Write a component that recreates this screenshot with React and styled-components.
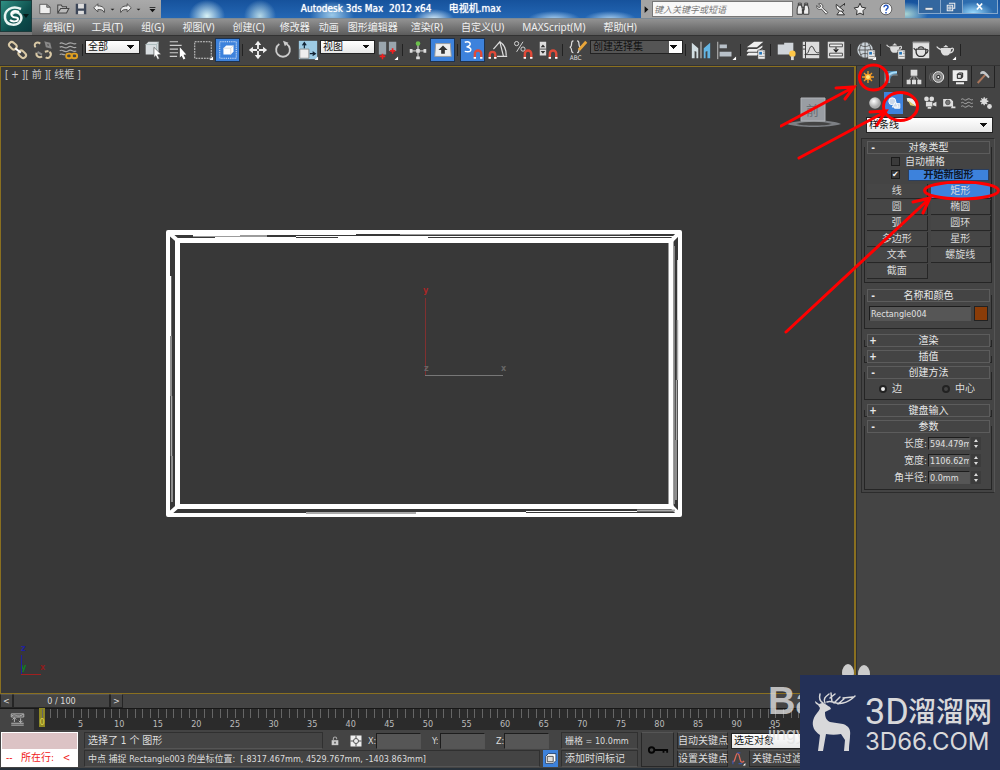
import React from "react";
import styled, { createGlobalStyle } from "styled-components";

const GlobalStyle = createGlobalStyle`
  * { box-sizing: border-box; }
  body { margin: 0; background: #444; color: #ddd; font: 10px/12px "DejaVu Sans Condensed", "Noto Sans", "Noto Sans CJK SC", sans-serif; overflow: hidden; }
  button, input, select { font: inherit; color: inherit; margin: 0; padding: 0; border: 0; border-radius: 0; background: none; }
  svg { display: block; flex: none; }
`;

const Window = styled.div`
  position: relative;
  min-height: 100vh;
  display: flex;
  flex-direction: column;
  background: #444;
`;

/* ---------- header ---------- */
const Header = styled.header`
  display: grid;
  grid-template-columns: 32px minmax(0, 1fr);
  grid-template-rows: 19px 16px;
  background: #777;
`;
const AppButton = styled.button`
  grid-row: 1 / 3;
  height: 32px;
  background: linear-gradient(135deg, #2f8f83, #0d4f4d 60%, #0a3c40);
  border: 1px solid #1c3b3b;
`;
const TitleBar = styled.div`
  display: flex;
  min-width: 0;
  background:
    radial-gradient(ellipse 18px 16px at 175px 16px, #d9f3f6, transparent),
    radial-gradient(ellipse 16px 16px at 228px 16px, #b5d8e6, transparent),
    radial-gradient(ellipse 22px 14px at 300px 15px, #9cc9e8, transparent),
    radial-gradient(ellipse 20px 10px at 402px 19px, #d8ecf8, transparent),
    radial-gradient(ellipse 26px 8px at 522px 19px, #a8cdec, transparent),
    radial-gradient(ellipse 26px 8px at 578px 19px, #a8cdec, transparent),
    radial-gradient(ellipse 22px 12px at 874px 14px, #a9d4d2, transparent),
    linear-gradient(#16529c, #2467b4);
  border-bottom: 1px solid #7d8a94;
`;
const QuickAccess = styled.div`
  display: flex;
  align-items: center;
  width: 129px;
  padding-left: 4px;
  background: linear-gradient(#aaa, #999);
`;
const QuickButton = styled.button`
  display: flex;
  justify-content: center;
  width: ${(p) => (p.$narrow ? 9 : 19)}px;
`;
const Title = styled.h1`
  flex: 1;
  margin: 0;
  font-size: 10px;
  line-height: 18px;
  font-weight: 400;
  text-align: center;
  white-space: pre;
  color: #fff;
  text-shadow: 0 0 1px #fff;
`;
const SearchArea = styled.div`
  display: flex;
  align-items: center;
  width: 264px;
  background: #a3a3a3;
`;
const SearchInput = styled.input`
  width: 141px;
  height: 16px;
  padding: 0 1px;
  background: #f8f8f8;
  border: 1px solid #777;
  &::placeholder { color: #777; font-size: 9px; font-style: italic; opacity: 1; }
`;
const SearchButton = styled.button`
  display: flex;
  justify-content: center;
  width: ${(p) => (p.$wide ? 34 : p.$narrow ? 11 : 19)}px;
`;
const WindowButtons = styled.div`
  display: flex;
  width: 95px;
  height: 14px;
  padding: 0 2px 0 13px;
`;
const WindowButton = styled.button`
  flex: ${(p) => (p.$wide ? 36 : 22)};
  display: flex;
  align-items: center;
  justify-content: center;
  border: 1px solid #86a8cc;
  border-top: 0;
  border-left-width: ${(p) => (p.$first ? 1 : 0)}px;
  background: ${(p) => (p.$wide ? "radial-gradient(ellipse at 30% 100%, #9adcff, #2c6cae 60%)" : "#33679f")};
`;
const MenuBar = styled.nav`
  display: flex;
  gap: 9px;
  padding-left: 11px;
  background: linear-gradient(#929292, #5c5c5c);
`;
const MenuButton = styled.button`
  margin-right: ${(p) => p.$after}px;
  font-family: "Noto Sans", "Noto Sans CJK SC", sans-serif;
  line-height: 15px;
  white-space: nowrap;
  color: #f0f0f0;
`;

/* ---------- tool bar ---------- */
const ToolBar = styled.div`
  display: flex;
  align-items: center;
  height: 31px;
  padding: 0 0 2px 5px;
  border-top: 1px solid #333;
  border-bottom: 1px solid #333;
  background: #444;
`;
const ToolButton = styled.button`
  flex: none;
  display: flex;
  align-items: center;
  justify-content: center;
  width: 25px;
  height: 24px;
  ${(p) => p.$on && "background: #3d82dc; border: 1px solid #1d3350;"}
`;
const Separator = styled.span`
  flex: none;
  width: 1px;
  height: 12px;
  margin: 0 2px;
  background: #222;
`;
const Drop = styled.select`
  appearance: none;
  flex: none;
  width: ${(p) => p.$w}px;
  height: 14px;
  margin-bottom: 6px;
  padding: 0 14px 0 2px;
  line-height: 12px;
  color: #111;
  border: 1px solid #222;
  background:
    linear-gradient(to bottom left, #111 50%, transparent 50%) right 8px center / 4px 4px no-repeat,
    linear-gradient(to bottom right, #111 50%, transparent 50%) right 4px center / 4px 4px no-repeat,
    ${(p) => (p.$dark ? "linear-gradient(to left, #fff 13px, #555 13px)" : "linear-gradient(#fff, #e8e8e8)")};
`;

/* ---------- viewport ---------- */
const Main = styled.main`
  flex: 1;
  display: grid;
  grid-template-columns: minmax(0, 1fr) 144px;
  min-height: 0;
`;
const Viewport = styled.section`
  display: grid;
  background: #383838;
  border: 1px solid #8a7020;
  border-width: 1px 2px 1px 1px;
  > * { grid-area: 1 / 1; }
`;
const ViewLabel = styled.span`
  padding: 2px 4px;
  color: #ccc;
`;
const Scene = styled.svg`
  width: 100%;
  height: 100%;
`;

/* ---------- command panel ---------- */
const Panel = styled.aside`
  padding: 0 5px 0 4px;
  border-left: 1px solid #303030;
`;
const Tabs = styled.div`
  display: flex;
  height: 22px;
  margin: 0 0 4px -4px;
`;
const Tab = styled.button`
  flex: 1;
  display: flex;
  align-items: center;
  justify-content: center;
  border-right: 1px solid #222;
  border-bottom: ${(p) => (p.$on ? 0 : 1)}px solid #2a2a2a;
`;
const Categories = styled.div`
  display: flex;
  height: 22px;
  margin: 0 0 3px 5px;
`;
const Category = styled.button`
  flex: 1;
  display: flex;
  align-items: center;
  justify-content: center;
  background: ${(p) => (p.$on ? "#3d82dc" : "none")};
`;
const PanelDrop = styled(Drop)`
  display: block;
  height: 16px;
  margin: 0 0 5px 5px;
`;
const Rollouts = styled.div`
  display: flex;
  flex-direction: column;
  gap: 3px;
  padding: 2px;
  border: 1px solid #2c2c2c;
  border-right-color: #555;
`;
const Group = styled.section`
  display: flex;
  flex-direction: column;
`;
const GroupHead = styled.button`
  position: relative;
  display: grid;
  grid-template-columns: 10px 1fr 10px;
  margin: 0 2px 0 3px;
  height: 13px;
  line-height: 11px;
  color: #e8e8e8;
  background: #444;
  border: 1px solid #5c5c5c;
`;
const GroupBody = styled.div`
  margin-top: -7px;
  padding: ${(p) => (p.$closed ? "6px 0 0" : "8px 0 3px 2px")};
  border: 1px solid #252525;
  border-top: 0;
  margin-bottom: ${(p) => (p.$tail || 0)}px;
`;
const CheckRow = styled.div`
  display: flex;
  align-items: center;
  gap: 6px;
  height: 13px;
  padding-left: 24px;
`;
const Check = styled.input`
  appearance: none;
  width: 9px;
  height: 9px;
  margin-right: -1px;
  background: #3a3a3a;
  border: 1px solid #1c1c1c;
  &:checked::after { content: "✔"; display: block; font: 8px/7px "DejaVu Sans", sans-serif; color: #fff; }
`;
const StartButton = styled.button`
  width: 81px;
  height: 12px;
  margin-left: 3px;
  line-height: 10px;
  color: #10182a;
  font-weight: 700;
  background: #3d82dc;
  border: 1px solid #2a3f60;
`;
const ShapeGrid = styled.div`
  display: grid;
  grid-template-columns: 1fr 1fr;
  gap: 1px 3px;
  padding-top: 3px;
`;
const ShapeButton = styled.button`
  height: 15px;
  line-height: 14px;
  color: #d8d8d8;
  background: ${(p) => (p.$on ? "#3d82dc" : "#464646")};
  border-right: 1px solid #262626;
  border-bottom: 1px solid #262626;
`;
const Field = styled.input`
  flex: ${(p) => (p.$w ? "none" : "1")};
  width: ${(p) => (p.$w ? p.$w + "px" : "0")};
  height: ${(p) => p.$h || 13}px;
  padding: 0 0 0 1px;
  font-size: 9px;
  color: #e0e0e0;
  background: #565656;
  border: 1px solid #1d1d1d;
  border-right-color: #555;
  border-bottom-color: #555;
`;
const NameRow = styled.div`
  display: flex;
  gap: 3px;
  padding: 3px 3px 4px 2px;
`;
const Swatch = styled.button`
  width: 14px;
  height: 15px;
  background: #8a3c08;
  border: 1px solid #222;
`;
const RadioRow = styled.div`
  display: flex;
  gap: 40px;
  padding: 3px 12px 1px;
`;
const RadioLabel = styled.label`
  display: flex;
  align-items: center;
  gap: 5px;
`;
const Radio = styled.input`
  appearance: none;
  width: 8px;
  height: 8px;
  border: 2px solid #222;
  border-radius: 50%;
  background: #444;
  &:checked { background: #eee; }
`;
const Params = styled.div`
  padding-top: 1px;
`;
const ParamRow = styled.label`
  display: flex;
  align-items: center;
  justify-content: flex-end;
  gap: 1px;
  height: 17px;
  padding-right: 10px;
`;

/* ---------- time line ---------- */
const TimeBar = styled.div`
  display: flex;
  height: 14px;
`;
const TimeButton = styled.button`
  width: ${(p) => (p.$thumb ? 97 : 13)}px;
  line-height: 12px;
  font-size: 9px;
  border: 1px solid #252525;
  border-top-color: #555;
`;
const Ruler = styled.div`
  display: flex;
  height: 22px;
  background: #2b2b2b;
  border-top: 1px solid #181818;
  padding-right: 186px;
`;
const CurveButton = styled.button`
  width: 34px;
  display: flex;
  align-items: center;
  justify-content: center;
  background: #444;
`;
const Frames = styled.div`
  flex: 1;
  display: flex;
  margin-left: 8px;
`;
const Major = styled.div`
  flex: 1;
  min-width: 0;
`;
const Ticks = styled.div`
  display: flex;
  height: 9px;
`;
const Tick = styled.span`
  flex: 1;
  border-left: 1px solid #666;
`;
const TickLabel = styled.span`
  display: block;
  width: 20px;
  margin-left: -10px;
  font-size: 9px;
  line-height: 12px;
  text-align: center;
  color: #bbb;
`;
const Current = styled(TickLabel)`
  width: 6px;
  margin: -10px 0 0 -3px;
  padding-top: 9px;
  height: 19px;
  line-height: 10px;
  background: #8d8722;
  color: #ddd04c;
`;

/* ---------- status area ---------- */
const StatusBar = styled.footer`
  display: flex;
  height: 40px;
  padding: 2px 0 1px 1px;
  border-bottom: 2px solid #27313a;
`;
const Script = styled.div`
  display: grid;
  grid-template-rows: 1fr 1fr;
  width: 77px;
  margin-right: 6px;
  border: 1px solid #fff;
`;
const ScriptLine = styled.div`
  padding: 0 4px;
  line-height: 17px;
  white-space: pre;
  color: #f02020;
  background: ${(p) => (p.$pink ? "#dcc3c5" : "#fff")};
`;
const Column = styled.div`
  display: flex;
  flex-direction: column;
  gap: 1px;
  width: ${(p) => p.$w}px;
  margin-right: 3px;
`;
const StatusRow = styled.div`
  display: flex;
  align-items: center;
  gap: 3px;
  height: 18px;
`;
const StatusBox = styled.span`
  flex: ${(p) => (p.$w ? "none" : 1)};
  width: ${(p) => (p.$w ? p.$w + "px" : "auto")};
  height: 17px;
  padding: 0 3px;
  font-size: ${(p) => (p.$small ? 9 : 10)}px;
  line-height: 16px;
  white-space: pre;
  border: 1px solid #303030;
  border-bottom-color: #555;
`;
const CoordLabel = styled.label`
  display: flex;
  align-items: center;
  justify-content: space-between;
  width: 53px;
  margin-right: 8px;
  font-size: 9px;
`;
const IconButton = styled.button`
  display: flex;
  align-items: center;
  justify-content: center;
  width: ${(p) => p.$w || 18}px;
  height: 17px;
  background: ${(p) => (p.$on ? "#3d82dc" : "none")};
`;
const KeyButton = styled.button`
  display: flex;
  align-items: center;
  justify-content: center;
  width: 33px;
  height: 35px;
  margin-right: 3px;
  border: 1px solid #282828;
  border-top-color: #555;
`;
const KeyDrop = styled(Drop)`
  height: 16px;
  margin: 1px 0 0;
`;
const TextButton = styled.button`
  width: ${(p) => p.$w || 51}px;
  height: 17px;
  line-height: 15px;
  text-align: ${(p) => (p.$w ? "left" : "center")};
  padding-left: ${(p) => (p.$w ? 2 : 0)}px;
  white-space: nowrap;
  border: 1px solid #282828;
  border-top-color: #555;
`;

/* ---------- overlays ---------- */
const Marks = styled.svg`
  position: absolute;
  top: 60px;
  right: 0;
  pointer-events: none;
`;
const Watermark = styled.div`
  position: absolute;
  right: 130px;
  bottom: 26px;
  width: 102px;
  height: 82px;
  display: flex;
  flex-direction: column;
  font: 700 38px/38px "Liberation Sans", sans-serif;
  color: rgba(225, 225, 225, 0.8);
`;
const Paw = styled.svg`
  margin-left: 72px;
`;
const WatermarkSub = styled.span`
  margin-top: 6px;
  font: 18px/16px "Liberation Sans", sans-serif;
`;
const Brand = styled.div`
  position: absolute;
  right: 0;
  bottom: 0;
  display: flex;
  width: 200px;
  height: 95px;
  padding-left: 11px;
  background: #233057;
  color: #d8d8da;
`;
const BrandText = styled.div`
  padding: 18px 0 0 2px;
  white-space: nowrap;
`;
const BrandName = styled.div`
  display: flex;
  font: 500 28px/34px "Noto Sans CJK SC", sans-serif;
`;
const BrandD = styled.span`
  width: 43px;
  font: 400 36px/38px Roboto, sans-serif;
`;
const BrandUrl = styled.div`
  font: 400 24px/22px Inter, sans-serif;
`;

/* ---------- icons ---------- */
const L = "#ddd";
const flyout = <path d="M23 19v4h-4z" fill="#fff" />;
const magnet = <path d="M14 21v-5a3.500 3.500 0 0 1 7 0v5" stroke="#e04a38" strokeWidth="2.600" />;
const magnetTip = <path d="M12.700 20.500h2.600M19.700 20.500h2.600" stroke="#fff" strokeWidth="2" />;
const card = <g><path d="M14 12h8v10h-8z" fill="#eee" stroke="#333" strokeWidth=".6" /><path d="M15.500 14h3v3h-3z" fill="#2475b8" /><path d="M19.500 14h2M19.500 16h2M15.500 19h6" stroke="#888" strokeWidth="1" /></g>;
const teapot = (
  <g fill="#ddd">
    <path d="M6 11h12c1 4-1 8-4 9h-4c-3-1-5-5-4-9z" />
    <path d="M9 10c0-2 6-2 6 0zM11 7.500h2v2h-2z" />
    <path d="M6 13c-3-2-4-2-5-4M18 12c4-3 5 3-1 5" fill="none" stroke="#ddd" strokeWidth="1.500" />
  </g>
);
const I = {
  link: <g stroke="#d9c9a6" strokeWidth="2.200"><rect x="2" y="4" width="9" height="6" rx="3" transform="rotate(42 6 7)" /><rect x="12" y="14" width="9" height="6" rx="3" transform="rotate(42 17 17)" /><path d="m9 10 6 5" stroke="#fff" /></g>,
  unlink: <g strokeWidth="2.200"><path d="M9 5C5 2 1 6 4 9M5 15c-1 4 3 6 6 4M19 14c4 3-1 9-4 6M14 14l4-1" stroke="#d9c9a6" /><path d="m15 4 4 1 1 4-4-1zM6 14l5 3" stroke="#888" /></g>,
  bind: <g><path d="M3 5c3-3 5 3 9 0s5 2 9 0M3 9c3-3 5 3 9 0s5 2 9 0M3 13c3-3 5 3 9 0s5 2 9 0M3 17c2-2 4 1 6 0" stroke="#aaa" strokeWidth="1.300" /><rect x="10" y="16" width="6" height="5" rx="2.500" stroke="#e0a020" strokeWidth="2" /><rect x="16" y="16" width="6" height="5" rx="2.500" stroke="#e0a020" strokeWidth="2" /></g>,
  pick: <g><path d="m4 6 3-3h11v11l-2 3H4z" fill="#d8dde0" /><path d="M4 6h12v11M16 6l2-3" stroke="#abb" /><path d="m13 9 8 8-4 .3 2 4-2 1-2-4-2 2z" fill="#fff" stroke="#444" strokeWidth=".7" /></g>,
  byname: <g><path d="M3 3h9M3 7h13M3 11h9M3 15h9M3 19h8" stroke="#ccc" strokeWidth="1.200" /><path d="m14 9 7 8-3 .3 2 4-2 1-2-4-2 2z" fill="#fff" /></g>,
  region: <g><rect x="3" y="3" width="18" height="18" stroke="#ddd" strokeDasharray="2 1" />{flyout}</g>,
  crossing: <g><rect x="3" y="3" width="18" height="18" stroke="#fff" strokeDasharray="1 1" /><path d="m7 10 3-3h8v7l-3 3H7z" fill="#fff" /><path d="M7 10h8v7M15 10l3-3" stroke="#ccc" strokeWidth=".8" /></g>,
  move: <g fill="#eee"><path d="M12 2l3.500 4.500h-7zM12 22l3.500-4.500h-7zM2 12l4.500-3.500v7zM22 12l-4.500-3.500v7z" /><path d="M12 6v5M12 13v5M6 12h5M13 12h5" stroke="#eee" strokeWidth="2" /></g>,
  rotate: <g><path d="M16 5.500A7.500 7.500 0 1 1 8 5.500" stroke="#ccc" strokeWidth="2" /><path d="m12 2 6 2-4 4z" fill="#ccc" /></g>,
  scale: <g><path d="M2 2h20v20H2z" fill="#9dcbe4" /><path d="M3 11h10v10H3z" fill="#eee" stroke="#888" /><path d="M8 10V5M6 7l2-3 2 3M14 16h5M17 14l3 2-3 2" stroke="#123" strokeWidth="1.300" />{flyout}</g>,
  pivot: <g><path d="M2 3h8v14H2zM13 3h8v10h-8z" fill="#9aa5ad" /><path d="M6 16v6M3 19h6M17 10v6M14 13h6" stroke="#f02020" strokeWidth="1.800" />{flyout}</g>,
  manip: <g><path d="M12 5v16M4 13h16" stroke="#bbb" strokeWidth="1.500" /><circle cx="12" cy="5" r="2.500" fill="#6cc04c" /><path d="M10 19h4v3h-4zM3 11h3v4H3zM18 11h3v4h-3zM10 11h4v4h-4z" fill="#ddd" /></g>,
  keyb: <g><path d="M4 5h16l1 14H3z" fill="#eee" stroke="#999" /><path d="m12 7 5 5h-3v4h-4v-4H7z" fill="#333" /></g>,
  snap: <g><path d="M3 3.500c7-2 8 4 2 5 7 1 6 7-2 5" stroke="#fff" strokeWidth="1.600" />{magnet}{magnetTip}</g>,
  angle: <g><path d="M3 21v-4a3 3 0 0 1 6 0v4" stroke="#e04a38" strokeWidth="2.500" /><path d="M1.700 20.500h2.600M7.700 20.500h2.600" stroke="#fff" strokeWidth="2" /><path d="M7 11l7-8 4 16M11 19h11M14 3c5 3 7 9 7 15" stroke="#ddd" strokeWidth="1.300" /></g>,
  percent: <g><circle cx="5" cy="5" r="2.300" stroke={L} /><circle cx="12" cy="11" r="2.300" stroke={L} /><path d="m12 3-7 11" stroke={L} />{magnet}{magnetTip}</g>,
  spin: <g><path d="M3 3h7v15H3z" fill="#ddd" /><path d="m4 9 2.500-3L9 9zM4 13l2.500 3L9 13z" fill="#333" /><path d="M3 11h7" stroke="#444" />{magnet}{magnetTip}</g>,
  sets: <g><path d="M7 2C3 2 7 8 3 9c4 1 0 6 4 6M11 2c4 0 0 6 4 7-4 1 0 6-4 6" stroke="#ddd" strokeWidth="1.300" /><path d="m21 3-8 9" stroke="#e9a63a" strokeWidth="3" /><text x="3" y="23" fontSize="7" fill="#ddd">ABC</text></g>,
  mirror: <g><path d="M2 4l7 6v11H7v-7l-2-1v8H2z" fill="#d2dee2" /><path d="M22 4l-7 6v11h2v-7l2-1v8h3z" fill="#63b5e4" /><path d="M12 3v18" stroke="#ddd" /></g>,
  align: <g><path d="M3 3v19" stroke="#ccc" /><path d="M5 6h8v4H5zM5 14h13v5H5z" fill="#b8c0c8" />{flyout}</g>,
  layers: <g><path d="m2 9 8-6h10l-7 6zM2 13l2-2h9l6-4v2l-6 5H2zM2 17l2-2h10l5-4v2l-6 5H2z" fill="#eee" />{card}</g>,
  ribbon: <g><path d="M3 6h7V4h10v13H3z" fill="#d0d5da" /><circle cx="19" cy="16" r="3.500" fill="#ffc747" /><path d="M19 19v4" stroke="#ddd" strokeWidth="3" /></g>,
  curve: <g><path d="M3 3h18v18H3z" fill="#ddd" /><path d="M6 3v18M5 17h16M3 7h3M3 11h3M7 16c3 0 3-9 6-8s2 8 8 7" stroke="#333" /></g>,
  schematic: <g><path d="M3 3h18v18H3z" fill="#ddd" /><path d="M5 5.500h14v3H5zM5 15.500h14v3H5z" stroke="#444" fill="#eee" /><path d="M12 9v4M9.500 11l2.500 3 2.500-3" stroke="#222" strokeWidth="1.300" /></g>,
  material: <g><circle cx="11" cy="12" r="8.500" fill="#ccd4da" /><path d="M3 12h16M11 3v18M5 6c4 3 8 3 12 0M5 18c4-3 8-3 12 0M8 4c-4 5-4 11 0 16M14 4c4 5 4 11 0 16" stroke="#555" />{card}{flyout}</g>,
  rsetup: <g><g transform="translate(1 -1) scale(.8)">{teapot}</g>{card}</g>,
  rframe: <g><path d="M3 3h18v18H3z" fill="#e2e2e2" /><path d="M3 4h18" stroke="#888" /><path d="M7 11h10c1 4-1 7-3 8h-4c-2-1-4-4-3-8zM9 10c1-2 5-2 6 0M7 13l-3-3M17 12c4-2 3 3 0 4" stroke="#333" strokeWidth="1.300" /></g>,
  render: <g><g transform="translate(1 0) scale(.9)">{teapot}</g>{flyout}</g>,
  /* quick access */
  new: <path d="M3 4h12l6 5v11H3zM15 4v5h6" fill="#eee" stroke="#555" strokeWidth="1.500" />,
  open: <path d="M3 19V5h6l2 3h7v3M3 19l5-8h14l-4 8z" fill="#bbb" stroke="#444" strokeWidth="1.800" />,
  save: <g><path d="M3 3h18v18H3z" fill="#3d4758" /><path d="M7 3h10v8H7zM7 15h10v6H7z" fill="#ddd" /></g>,
  undo: <path d="m3 10 7-7v4c8-1 13 4 11 11-2-5-6-5-11-5v4z" fill="#eee" stroke="#444" strokeWidth="1.500" />,
  redo: <path d="m21 10-7-7v4C6 6 1 11 3 18c2-5 6-5 11-5v4z" fill="#eee" stroke="#444" strokeWidth="1.500" />,
  caret: <path d="M3 8h18l-9 9z" fill="#222" />,
  bar: <path d="M2 3h20v3H2zM2 10h20l-10 11z" fill="#111" />,
  right: <path d="m7 3 10 9-10 9z" fill="#111" />,
  bino: <g fill="#eee" stroke="#333" strokeWidth="1.600"><path d="M4 5h5l2 7v9H2v-9zM15 5h5l2 7v9h-9v-9zM10 9h4v5h-4M4 2h5v3H4zM15 2h5v3h-5z" /></g>,
  wrench: <path d="M3 6c-1 6 4 8 8 6l8 9 3-3-9-8c2-5-3-9-7-7l4 4-3 3z" fill="#eee" stroke="#444" strokeWidth="1.500" />,
  dish: <path d="M4 4c-2 8 6 14 13 11zM10 9l8-6M9 16l-4 6h13l-5-6M18 2v4" fill="#eee" stroke="#333" strokeWidth="1.700" />,
  star: <path d="m12 2 3 7 7 1-5 5 1 7-6-3-6 3 1-7-5-5 7-1z" fill="#eee" stroke="#333" strokeWidth="1.700" />,
  help: <g><circle cx="12" cy="12" r="10" fill="#fff" stroke="#555" strokeWidth="1.500" /><path d="M8.500 9c0-5 7-4 7 0 0 3-3.500 2-3.500 6M12 17v2.500" stroke="#2456c0" strokeWidth="2.500" /></g>,
  /* command panel */
  sun: <g><path d="M12 3v18M3 12h18M6 6l12 12M18 6 6 18" stroke="#f09a28" strokeWidth="2" /><circle cx="12" cy="12" r="4" fill="#ffe67a" stroke="#f59b24" strokeWidth="2" /></g>,
  modify: <g><path d="M4 3h17v5c-7 0-11 5-11 13H4z" fill="#477fa5" /><path d="M5 20C5 9 12 5 21 5" stroke="#a8ddfa" strokeWidth="3" /><path d="M3 2v20M10 21V9h12" stroke="#bbb" /></g>,
  hierarchy: <g fill="#ddd"><path d="M7 1h10v9H7zM1 16h6v7H1zM9 16h6v7H9zM17 16h6v7h-6z" /><path d="M12 10v7M4 17l6-7M20 17l-6-7" stroke="#ccc" /></g>,
  motion: <g><circle cx="14" cy="12" r="8" fill="#888" stroke="#eee" strokeWidth="1.500" /><circle cx="14" cy="12" r="4" fill="#333" stroke="#ccc" /><circle cx="14" cy="12" r="1.500" fill="#fff" /><path d="M3 6c-3 5-3 8 0 12M6 5c-3 5-3 9 0 14" stroke="#777" /></g>,
  display: <g><path d="M1 2h22v16H1zM6 20h12v3H6z" fill="#eee" /><path d="M8 8l2-2h6v6l-2 2H8zM8 8h6v6" fill="#ddd" stroke="#222" strokeWidth="1.500" /></g>,
  hammer: <g><path d="M16 8 4 21" stroke="#aa765b" strokeWidth="3" /><path d="M8 5c4-4 8-2 14 7l-2 2-6-6c-2-1-4-1-6 0z" fill="#c5c9cc" /></g>,
  sphere: <circle cx="12" cy="12" r="10" fill="url(#ball)" />,
  shapes: <g fill="#ccd8ea" stroke="#fff" strokeWidth="1.500"><path d="M13 13h9v8h-9z" /><circle cx="9" cy="9" r="6" /><path d="m15 10-6 9h10z" /></g>,
  light: <g><path d="M3 4c8-2 16 4 17 14L4 9z" fill="#eee" /><path d="m5 7 14 11-10-2z" fill="#dfcf70" /></g>,
  camera: <g fill="#ddd"><circle cx="6" cy="5" r="4" /><circle cx="15" cy="5" r="4" /><path d="M5 10h11v8H5zM17 13l6-3v8l-6-2zM8 19h6v3H8z" /></g>,
  tape: <g><path d="M2 5h13l4 4v9H2zM17 18h6v3h-8z" fill="#ddd" /><circle cx="10" cy="11" r="4" fill="#777" stroke="#333" /></g>,
  waves: <path d="M2 6c4-4 5 4 10 0s6 3 10 0M2 12c4-4 5 4 10 0s6 3 10 0M2 18c4-4 5 4 10 0s6 3 10 0" stroke="#aaa" strokeWidth="1.700" />,
  gears: <g stroke="#ddd" strokeWidth="2.200"><circle cx="9" cy="9" r="4" fill="#ddd" strokeDasharray="2 1" /><path d="M9 2v14M2 9h14M4 4l10 10M14 4 4 14" /><circle cx="18" cy="18" r="3" fill="#ddd" /></g>,
  /* status area */
  lock: <g><path d="M4 10h16v12H4z" fill="#ccc" /><path d="M8 10V6c0-5 8-5 8 0v2" stroke="#aaa" strokeWidth="2.500" /><path d="M12 14v4" stroke="#333" strokeWidth="3" /></g>,
  center: <g><path d="M1 1h22v22H1z" fill="#eee" /><circle cx="12" cy="12" r="5" stroke="#555" strokeWidth="2" /><path d="M12 1v6M12 17v6M1 12h6M17 12h6" stroke="#555" strokeWidth="2" /></g>,
  iso: <g><path d="M3 8 8 3h14v13l-5 5H3z" fill="#fff" stroke="#1d3558" strokeWidth="1.500" /><path d="M6 8h11v10H6z" fill="#ddd" stroke="#333" strokeWidth="1.500" /></g>,
  key: <g stroke="#050505" strokeWidth="2"><circle cx="5" cy="12" r="3" /><path d="M8 12h14v3M18 12v3" /></g>,
  wave: <g><path d="M2 17c5 3 5-14 9-13s2 20 10 12" stroke="#e06a5a" strokeWidth="2" /><path d="M3 15v6M10 3h5M12 20h6" stroke="#3653a5" strokeWidth="2" />{flyout}</g>,
  mini: <g stroke="#bbb" strokeWidth="1.500"><path d="M2 3h20v5H2zM2 21h20M2 18h20M7 10v6M17 10v6M4 12l3-3 3 3M14 14l3 3 3-3M3 6c6-4 8 4 18-2" /></g>,
  min: <path d="M3 14h18v5H3z" fill="#fff" stroke="#456" />,
  max: <path d="M7 3h14v12h-4M3 8h13v13H3zM7 12h5v5H7z" stroke="#eee" strokeWidth="2.500" />,
  close: <path d="M5 4l14 16M19 4 5 20" stroke="#fff" strokeWidth="4.500" />,
};
const Icon = ({ n, s = 22 }) => (
  <svg width={s} height={s} viewBox="0 0 24 24" fill="none" aria-hidden="true">
    {n === "sphere" && (
      <defs><radialGradient id="ball" cx=".4" cy=".35"><stop offset="0" stopColor="#fff" /><stop offset="1" stopColor="#aaa" /></radialGradient></defs>
    )}
    {I[n]}
  </svg>
);

const menus = [["编辑(E)", 8], ["工具(T)", 9], ["组(G)", 9], ["视图(V)", 9], ["创建(C)", 6], ["修改器", 0], ["动画", 0], ["图形编辑器", 4], ["渲染(R)", 9], ["自定义(U)", 9], ["MAXScript(M)", 9], ["帮助(H)", 0]];
const quick = [["new", 14], ["open", 14], ["save", 14], ["undo", 14], ["caret", 5], ["redo", 14], ["caret", 5], ["bar", 7]];
const tools = ["link", "unlink", "bind", "|", ["全部", 55], "pick", "byname", "region", "crossing*", "|", "move", "rotate", "scale", ["视图", 55], "pivot", "|", "manip", "keyb*", "|", "snap*", "angle", "percent", "spin", "|", "sets", ["创建选择集", 93, true], "|", "mirror", "align", "|", "layers", "|", "ribbon", "curve", "schematic", "|", "material", "|", "rsetup", "rframe", "render", "|"];
const shapes = ["线", "矩形", "圆", "椭圆", "弧", "圆环", "多边形", "星形", "文本", "螺旋线", "截面"];

function Tool({ item }) {
  if (item === "|") return <Separator />;
  if (Array.isArray(item)) return <Drop $w={item[1]} $dark={item[2]} aria-label={item[0]}><option>{item[0]}</option></Drop>;
  const name = item.replace("*", "");
  return <ToolButton $on={name !== item} aria-label={name}><Icon n={name} /></ToolButton>;
}

function Rollout({ title, closed, tail, children }) {
  return (
    <Group>
      <GroupHead aria-expanded={!closed}><b>{closed ? "+" : "-"}</b><span>{title}</span></GroupHead>
      <GroupBody $closed={closed} $tail={tail}>{children}</GroupBody>
    </Group>
  );
}

function Param({ label, value }) {
  return (
    <ParamRow>
      {label}:
      <Field $w={42} defaultValue={value} />
      <svg width="10" height="13" viewBox="0 0 10 13"><path d="M0 0h10v13H0z" fill="#3c3c3c" /><path d="M3 5l2-3 2 3zM3 8l2 3 2-3z" fill="#ddd" /></svg>
    </ParamRow>
  );
}

function SceneDrawing() {
  return (
    <Scene viewBox="1 67 853 626" fill="none" preserveAspectRatio="xMidYMid slice" role="img" aria-label="线框">
      <g stroke="#fff">
        <rect x="168" y="232" width="512" height="283" strokeWidth="4" strokeLinejoin="round" />
        <rect x="177.500" y="240.500" width="493.500" height="266" strokeWidth="5" />
        <path d="M168 232l9 8M680 232l-9 9M168 515l9-8M680 515l-9-9" strokeWidth="4" />
        <path d="M193 235.500h47M173 234.500h152M236 234.500h120M193 236h74M215 237.500h81M296 236.500h130M338 237.500h90M400 234h160M424 236.500h250M560 234h70" strokeWidth="1" />
        <path d="M674.500 246v258" strokeWidth="1" stroke="#888" />
        <path d="M170.500 276v60M678 260v60" strokeWidth="1.500" />
        <path d="M171 336v60M677.500 320v60M171.500 396v60M676.500 380v60M172 456v46M676 440v60" strokeWidth="1.500" stroke="#aaa" />
        <path d="M194 513.500h112M415 512.500h111M526 511.500h111" strokeWidth="1" />
        <path d="M306 513h110M637 510.500h38" stroke="#aaa" strokeWidth="2" />
      </g>
      <path d="M425.500 298v78" stroke="#803030" />
      <path d="M425 375.500h78" stroke="#777" />
      <g fontFamily="DejaVu Sans" fontSize="8" fontWeight="700">
        <text x="423" y="293" fill="#a82727">y</text>
        <text x="424" y="371" fill="#666">z</text>
        <text x="501" y="371" fill="#666">x</text>
        <text x="21" y="651" fill="#2020a0">z</text>
        <text x="21" y="670" fill="#108020">y</text>
        <text x="40" y="670" fill="#8c1c1c">x</text>
      </g>
      <path d="M21.500 655v19" stroke="#2020a0" />
      <path d="M21 674.500h20" stroke="#a02020" />
      <path d="M787 124c12-5 43-5 54 0-12 4-43 4-54 0z" fill="#7d8085" />
      <path d="M796 124c10-3 26-3 36 0-8 2-28 2-36 0z" fill="#444" />
      <path d="M801 98h24v23h-24z" fill="#999da3" stroke="#b0b3b8" />
      <text x="806" y="115" fontSize="13" fill="#6c7076" fontFamily="Noto Sans CJK SC">前</text>
    </Scene>
  );
}

export default function App() {
  return (
    <Window>
      <GlobalStyle />
      <Header>
        <AppButton aria-label="3ds Max">
          <svg width="30" height="30" viewBox="0 0 30 30" fill="none">
            <path d="M20 8C11 4 3 9 4 17c1 8 13 9 16 2 2-6-5-10-9-6" stroke="#e8f4f1" strokeWidth="2.500" />
            <path d="M18 11c-6-3-9 1-7 4s6 0 6 3-6 3-8 1" stroke="#fff" strokeWidth="2" />
            <path d="M22 13h6l-3 4z" fill="#061a1a" />
          </svg>
        </AppButton>
        <TitleBar>
          <QuickAccess>
            {quick.map(([n, s], i) => (
              <QuickButton key={i} $narrow={n === "caret"} aria-label={n}><Icon n={n} s={s} /></QuickButton>
            ))}
          </QuickAccess>
          <Title>{"Autodesk 3ds Max  2012 x64      电视机.max"}</Title>
          <SearchArea>
            <SearchButton $narrow aria-label="展开"><Icon n="right" s={9} /></SearchButton>
            <SearchInput placeholder="键入关键字或短语" aria-label="搜索" />
            {["bino", "wrench", "dish", "star"].map((n) => <SearchButton key={n} aria-label={n}><Icon n={n} s={14} /></SearchButton>)}
            <SearchButton $wide aria-label="帮助"><Icon n="help" s={14} /></SearchButton>
          </SearchArea>
          <WindowButtons>
            <WindowButton $first aria-label="最小化"><Icon n="min" s={10} /></WindowButton>
            <WindowButton aria-label="还原"><Icon n="max" s={10} /></WindowButton>
            <WindowButton $wide aria-label="关闭"><Icon n="close" s={9} /></WindowButton>
          </WindowButtons>
        </TitleBar>
        <MenuBar>
          {menus.map(([m, after]) => <MenuButton key={m} $after={after}>{m}</MenuButton>)}
        </MenuBar>
      </Header>

      <ToolBar>{tools.map((t, i) => <Tool key={i} item={t} />)}</ToolBar>

      <Main>
        <Viewport>
          <SceneDrawing />
          <ViewLabel>[ + ][ 前 ][ 线框 ]</ViewLabel>
        </Viewport>
        <Panel>
          <Tabs>
            {["sun", "modify", "hierarchy", "motion", "display", "hammer"].map((n, i) => <Tab key={n} $on={i === 0} aria-label={n}><Icon n={n} s={16} /></Tab>)}
          </Tabs>
          <Categories>
            {["sphere", "shapes", "light", "camera", "tape", "waves", "gears"].map((n, i) => <Category key={n} $on={i === 1} aria-label={n}><Icon n={n} s={14} /></Category>)}
          </Categories>
          <PanelDrop $w={127} aria-label="类别"><option>样条线</option></PanelDrop>
          <Rollouts>
            <Rollout title="对象类型" tail={3}>
              <CheckRow><Check type="checkbox" id="grid" /><label htmlFor="grid">自动栅格</label></CheckRow>
              <CheckRow><Check type="checkbox" defaultChecked aria-label="开始新图形" /><StartButton>开始新图形</StartButton></CheckRow>
              <ShapeGrid>
                {shapes.map((s) => <ShapeButton key={s} $on={s === "矩形"}>{s}</ShapeButton>)}
              </ShapeGrid>
            </Rollout>
            <Rollout title="名称和颜色" tail={2}>
              <NameRow><Field $h={15} defaultValue="Rectangle004" aria-label="名称" /><Swatch aria-label="颜色" /></NameRow>
            </Rollout>
            <Rollout title="渲染" closed />
            <Rollout title="插值" closed />
            <Rollout title="创建方法" tail={1}>
              <RadioRow>
                <RadioLabel><Radio type="radio" name="method" defaultChecked />边</RadioLabel>
                <RadioLabel><Radio type="radio" name="method" />中心</RadioLabel>
              </RadioRow>
            </Rollout>
            <Rollout title="键盘输入" closed />
            <Rollout title="参数">
              <Params>
                <Param label="长度" value="594.479m" />
                <Param label="宽度" value="1106.62m" />
                <Param label="角半径" value="0.0mm" />
              </Params>
            </Rollout>
          </Rollouts>
        </Panel>
      </Main>

      <TimeBar>
        <TimeButton aria-label="上一帧">&lt;</TimeButton>
        <TimeButton $thumb>0 / 100</TimeButton>
        <TimeButton aria-label="下一帧">&gt;</TimeButton>
      </TimeBar>
      <Ruler>
        <CurveButton aria-label="曲线编辑器"><Icon n="mini" s={15} /></CurveButton>
        <Frames>
          {Array.from({ length: 20 }, (_, i) => (
            <Major key={i}>
              <Ticks>{[0, 1, 2, 3, 4].map((t) => <Tick key={t} />)}</Ticks>
              {i === 0 ? <Current>0</Current> : <TickLabel>{i * 5}</TickLabel>}
            </Major>
          ))}
        </Frames>
      </Ruler>

      <StatusBar>
        <Script><ScriptLine $pink /><ScriptLine>{"--   所在行:   <"}</ScriptLine></Script>
        <Column $w={474}>
          <StatusRow>
            <StatusBox $w={239}>选择了 1 个 图形</StatusBox>
            <IconButton aria-label="锁定"><Icon n="lock" s={10} /></IconButton>
            <IconButton aria-label="绝对模式"><Icon n="center" s={12} /></IconButton>
            {["X", "Y", "Z"].map((a) => <CoordLabel key={a}>{a}:<Field $w={45} $h={16} /></CoordLabel>)}
          </StatusRow>
          <StatusRow>
            <StatusBox $small>中点 捕捉 Rectangle003 的坐标位置:  [-8317.467mm, 4529.767mm, -1403.863mm]</StatusBox>
            <IconButton $on $w={15} aria-label="孤立"><Icon n="iso" s={13} /></IconButton>
          </StatusRow>
        </Column>
        <Column $w={77}>
          <StatusRow><StatusBox $small>栅格 = 10.0mm</StatusBox></StatusRow>
          <StatusRow><StatusBox>添加时间标记</StatusBox></StatusRow>
        </Column>
        <KeyButton aria-label="设置关键点"><Icon n="key" s={22} /></KeyButton>
        <Column $w={51}>
          <TextButton>自动关键点</TextButton>
          <TextButton>设置关键点</TextButton>
        </Column>
        <Column $w={92}>
          <KeyDrop $w={92} aria-label="选择集"><option>选定对象</option></KeyDrop>
          <StatusRow>
            <IconButton $w={15} aria-label="切线"><Icon n="wave" s={15} /></IconButton>
            <TextButton $w={70}>关键点过滤器</TextButton>
          </StatusRow>
        </Column>
      </StatusBar>

      <Marks width="220" height="280" viewBox="780 60 220 280" fill="none" stroke="#f00" strokeWidth="3" strokeLinecap="round">
        <ellipse cx="873.500" cy="77.500" rx="14" ry="12.500" />
        <ellipse cx="900.500" cy="106.500" rx="17" ry="14" />
        <ellipse cx="961.500" cy="190.500" rx="37" ry="8.500" />
        <path d="M781 126L854 87M836 88l18-1-9 12M799 158l86-46M870 112l16-1-9 14M786 332L930 198M913 202l17-4-7 15" />
      </Marks>

      <Watermark aria-hidden="true">
        <Paw width="30" height="20" viewBox="840 662 30 20"><ellipse cx="848" cy="673" rx="6" ry="9" fill="#ccc" /><ellipse cx="864" cy="674" rx="6" ry="9" fill="#ccc" /></Paw>
        <span>Bai</span>
        <WatermarkSub>jingyan</WatermarkSub>
      </Watermark>
      <Brand>
        <svg width="52" height="95" viewBox="811 675 52 95">
          <path d="M815 701l4 3 3-1c3 0 4 2 8 4l1 2-4 2-2 1c0 5 1 8 5 10l13 2c6 2 8 6 7 12 0 4-1 8-1 15h-5l1-11-4-6c-5 1-10 1-15 0l-3 17h-5l2-16c-6-4-8-9-7-14 1-6 6-9 7-13l-2-3c-2-1-3-2-3-4z" fill="#d8d8da" />
          <path d="M823 703c-4-2-4-5-3-9M825 703c-2-4 0-6 4-9M827 702c6-2 9 3 16 1 5-1 9-4 12-7M832 702l-1-9M838 704l7-6M830 698l5-4M843 698l10-1M834 703l6-6" fill="none" stroke="#d8d8da" strokeWidth="1.500" strokeLinecap="round" />
        </svg>
        <BrandText>
          <BrandName><BrandD>3D</BrandD>溜溜网</BrandName>
          <BrandUrl>3D66.COM</BrandUrl>
        </BrandText>
      </Brand>
    </Window>
  );
}
